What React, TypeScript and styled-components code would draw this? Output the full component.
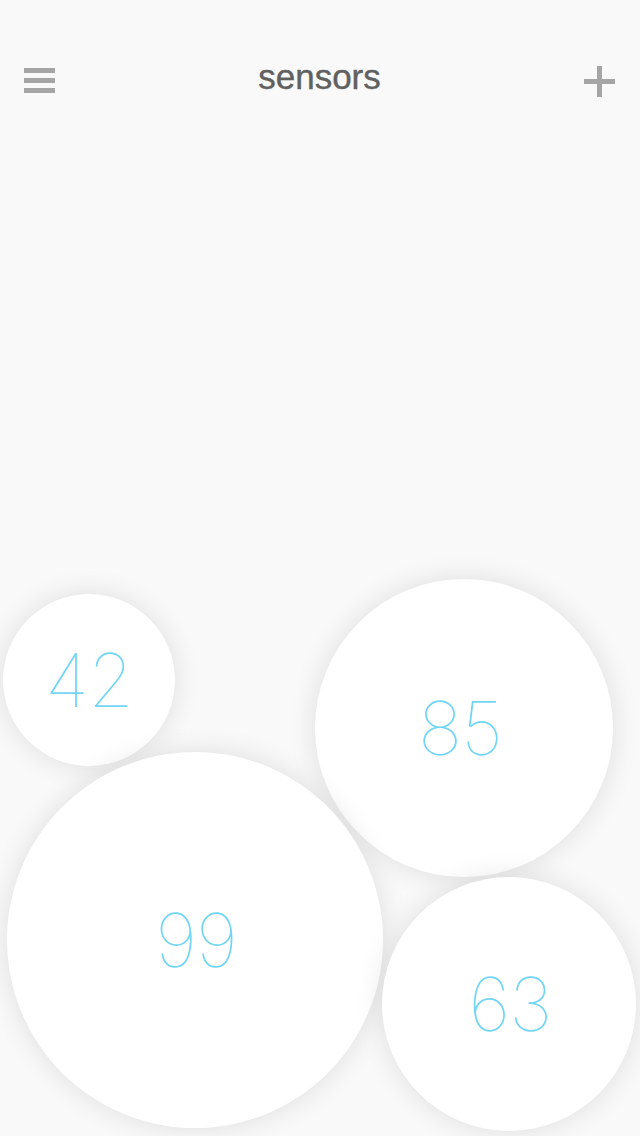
import styled, { createGlobalStyle } from 'styled-components';

const GlobalStyle = createGlobalStyle`
  html, body {
    margin: 0;
    padding: 0;
    background: #f9f9f9;
  }
  body {
    font-family: "Liberation Sans", Arial, sans-serif;
  }
`;

const Screen = styled.div`
  background: #f9f9f9;
  height: 1136px;
  overflow: hidden;
  position: relative;
  width: 640px;
`;

const Header = styled.header`
  align-items: center;
  display: flex;
  height: 60px;
  justify-content: space-between;
  padding: 50px 25px 0 24px;
`;

const MenuButton = styled.button`
  background: transparent;
  border: none;
  display: flex;
  flex-direction: column;
  gap: 5px;
  padding: 0;
  width: 31px;
`;

const MenuBar = styled.span`
  background: #a5a5a5;
  display: block;
  height: 5px;
  width: 31px;
`;

const Title = styled.h1`
  color: #606060;
  font-family: "Liberation Sans", Arial, sans-serif;
  font-size: 35px;
  font-weight: 400;
  margin: 0 0 6px 0;
  -webkit-text-stroke: 0.4px #606060;
`;

const AddButton = styled.button`
  background: transparent;
  border: none;
  height: 31px;
  margin-top: 3px;
  padding: 0;
  position: relative;
  width: 31px;

  &::before,
  &::after {
    background: #a5a5a5;
    content: '';
    position: absolute;
  }

  &::before {
    height: 5px;
    left: 0;
    top: 13px;
    width: 31px;
  }

  &::after {
    height: 31px;
    left: 13px;
    top: 0;
    width: 5px;
  }
`;

const Canvas = styled.main`
  height: 1026px;
  position: relative;
`;

const Bubble = styled.div<{ $x: number; $y: number; $size: number }>`
  align-items: center;
  background: #ffffff;
  border-radius: 50%;
  box-shadow: 0 0 28px rgba(0, 0, 0, 0.11);
  display: flex;
  height: ${(p) => p.$size}px;
  justify-content: center;
  left: ${(p) => p.$x - p.$size / 2}px;
  position: absolute;
  top: ${(p) => p.$y - p.$size / 2 - 110}px;
  width: ${(p) => p.$size}px;
`;

const Reading = styled.span<{ $shift: number }>`
  color: #72d5f5;
  font-family: Inter, Lato, "Liberation Sans", sans-serif;
  font-size: 74px;
  font-weight: 100;
  letter-spacing: -1px;
  line-height: 1;
  margin-left: ${(p) => p.$shift * 2}px;
`;

const sensors = [
  { value: 42, x: 89, y: 680, size: 172, shift: 0 },
  { value: 85, x: 464, y: 728, size: 298, shift: -4 },
  { value: 99, x: 195, y: 940, size: 376, shift: 1 },
  { value: 63, x: 509, y: 1004, size: 254, shift: 1 },
];

function App() {
  return (
    <>
      <GlobalStyle />
      <Screen>
        <Header>
          <MenuButton aria-label="menu">
            <MenuBar />
            <MenuBar />
            <MenuBar />
          </MenuButton>
          <Title>sensors</Title>
          <AddButton aria-label="add sensor" />
        </Header>
        <Canvas>
          {sensors.map((s) => (
            <Bubble key={s.value} $x={s.x} $y={s.y} $size={s.size}>
              <Reading $shift={s.shift}>{s.value}</Reading>
            </Bubble>
          ))}
        </Canvas>
      </Screen>
    </>
  );
}

export default App;
